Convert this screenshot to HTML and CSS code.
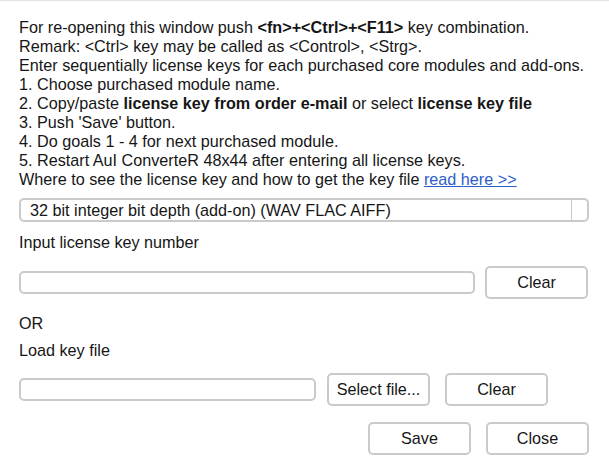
FILE: index.html
```html
<!DOCTYPE html>
<html>
<head>
<meta charset="utf-8">
<link rel="stylesheet" href="styles.css">
</head>
<body>
<div class="page">
  <div class="intro">
    <div>For re-opening this window push <b>&lt;fn&gt;+&lt;Ctrl&gt;+&lt;F11&gt;</b> key combination.</div>
    <div>Remark: &lt;Ctrl&gt; key may be called as &lt;Control&gt;, &lt;Strg&gt;.</div>
    <div>Enter sequentially license keys for each purchased core modules and add-ons.</div>
    <div>1. Choose purchased module name.</div>
    <div>2. Copy/paste <b>license key from order e-mail</b> or select <b>license key file</b></div>
    <div>3. Push 'Save' button.</div>
    <div>4. Do goals 1 - 4 for next purchased module.</div>
    <div>5. Restart AuI ConverteR 48x44 after entering all license keys.</div>
    <div>Where to see the license key and how to get the key file <a class="link" href="#">read here &gt;&gt;</a></div>
  </div>
  <div class="select">
    <span class="select-text">32 bit integer bit depth (add-on) (WAV FLAC AIFF)</span>
    <span class="select-arrow"></span>
  </div>
  <div class="label label-key">Input license key number</div>
  <div class="row row-key">
    <div class="field field-key"></div>
    <div class="btn">Clear</div>
  </div>
  <div class="label label-or">OR</div>
  <div class="label label-file">Load key file</div>
  <div class="row row-file">
    <div class="field field-file"></div>
    <div class="btn btn-select">Select file...</div>
    <div class="btn btn-clear2">Clear</div>
  </div>
  <div class="row row-actions">
    <div class="btn">Save</div>
    <div class="btn">Close</div>
  </div>
</div>
</body>
</html>
```
FILE: styles.css
```css
html, body {
  margin: 0;
  padding: 0;
  background: #ffffff;
}
body {
  width: 609px;
  height: 473px;
  overflow: hidden;
  border-top: 1px solid #e4e4e4;
  box-sizing: border-box;
  font-family: "Liberation Sans", Arial, sans-serif;
  font-size: 16.2px;
  color: #161616;
}
.page {
  padding: 17px 21px 0 19px;
}
.intro {
  line-height: 19px;
}
.intro b {
  font-weight: bold;
}
.link {
  color: #2c5ec9;
  text-decoration: underline;
}
.select {
  margin-top: 9px;
  height: 24px;
  box-sizing: border-box;
  border: 2px solid #cacac6;
  border-radius: 5px;
  display: flex;
  align-items: center;
  width: 570px;
}
.select-text {
  flex: 1;
  padding-left: 9px;
  line-height: 20px;
}
.select-arrow {
  width: 15px;
  height: 20px;
  border-left: 1px solid #cacac6;
}
.label {
  line-height: 19px;
}
.label-key {
  margin-top: 11px;
}
.label-or {
  margin-top: 15px;
}
.label-file {
  margin-top: 8px;
}
.row {
  display: flex;
  align-items: center;
}
.row-key {
  margin-top: 14px;
  gap: 10px;
}
.row-file {
  margin-top: 13px;
}
.row-actions {
  margin-top: 16px;
  justify-content: flex-end;
  gap: 15px;
  width: 570px;
}
.field {
  height: 23px;
  box-sizing: border-box;
  border: 2px solid #cacac6;
  border-radius: 5px;
  background: #ffffff;
}
.field-key {
  width: 457px;
}
.field-file {
  width: 297px;
}
.btn {
  width: 103px;
  height: 33px;
  box-sizing: border-box;
  border: 2px solid #cacac6;
  border-radius: 5px;
  display: flex;
  align-items: center;
  justify-content: center;
  background: #ffffff;
  color: #161616;
}
.btn-select {
  margin-left: 11px;
}
.btn-clear2 {
  margin-left: 15px;
}
```
